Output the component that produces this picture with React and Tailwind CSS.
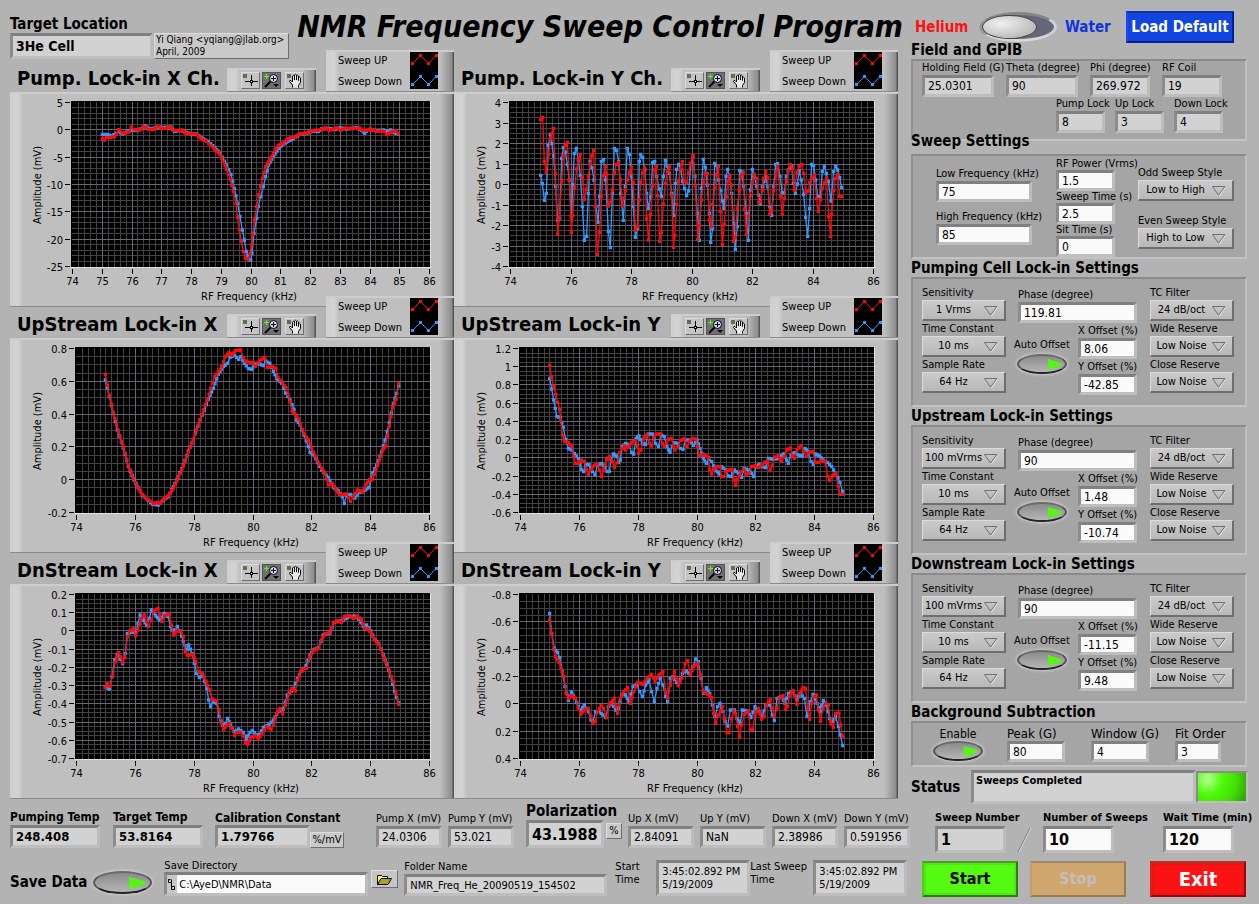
import { useState } from 'react'

// Trace vertices, in thirds of a pixel
const TRACES = {
  pumpX: {
    origin: [30, 276],
    up: '307,415 313,420 319,413 330,413 343,410 349,403 355,389 361,392 367,399 379,398 388,395 394,381 402,388 415,390 424,387 430,381 439,381 445,388 460,389 469,380 478,381 484,386 496,385 508,381 514,383 520,391 530,392 547,390 556,399 568,402 586,401 596,409 606,419 618,422 626,431 640,443 650,454 660,463 670,485 680,508 691,538 700,575 708,610 713,653 718,688 724,724 730,755 736,775 744,778 750,760 755,735 758,705 763,660 770,620 776,585 782,560 788,535 797,500 806,486 815,470 825,450 835,437 850,429 860,420 872,412 885,412 895,404 908,400 925,399 935,392 950,391 965,389 977,383 988,391 1000,387 1010,383 1022,391 1035,384 1050,385 1065,386 1078,384 1088,391 1100,391 1112,387 1128,394 1145,393 1153,395 1160,403 1170,398 1180,394 1188,394 1195,400',
    down: '307,403 322,403 335,408 349,400 357,395 367,402 385,393 400,390 412,392 436,378 448,387 470,383 490,382 513,381 523,395 540,391 560,397 575,404 590,402 610,417 625,425 645,443 660,460 680,495 693,523 703,565 713,610 720,650 727,690 733,720 739,755 748,780 752,780 756,760 762,700 770,655 775,620 782,590 790,560 797,530 806,495 815,478 825,462 837,445 850,432 865,423 880,416 900,403 920,401 935,393 955,395 965,387 985,385 1005,389 1020,383 1040,387 1070,383 1085,391 1094,400 1105,388 1130,391 1150,390 1160,395 1172,390 1182,398 1195,402'
  },
  pumpY: {
    origin: [-3, 276],
    up: '257,359 263,352 268,485 274,517 281,463 286,415 295,385 301,520 308,703 313,655 320,545 325,468 331,436 337,427 343,540 349,697 353,647 359,563 365,507 371,478 376,463 382,533 388,598 394,568 400,530 405,493 410,468 416,451 421,620 427,763 434,697 439,590 445,527 451,499 455,523 460,618 466,607 472,570 478,518 484,493 490,487 496,540 502,616 511,573 517,540 523,517 529,502 535,548 541,690 548,680 553,600 557,547 563,517 569,502 575,655 581,720 587,643 593,557 598,510 604,499 608,587 614,724 619,697 625,613 631,550 637,515 643,499 650,587 655,742 659,707 665,613 670,543 676,508 682,485 688,545 695,548 701,518 706,492 714,466 721,558 728,718 733,678 739,600 745,547 750,520 757,521 763,660 769,680 773,613 779,563 784,523 790,499 796,634 802,733 808,673 814,590 818,543 824,526 829,555 835,724 841,712 847,625 853,570 858,530 865,517 869,627 874,703 880,648 886,587 892,547 898,523 905,535 911,607 917,605 922,570 926,535 932,515 938,533 944,643 950,633 956,573 962,527 968,499 976,590 982,643 988,595 994,545 1000,512 1006,493 1012,505 1018,570 1026,517 1032,500 1040,494 1046,520 1052,577 1060,573 1064,548 1070,535 1078,525 1085,595 1090,634 1097,600 1102,565 1108,547 1115,535 1121,650 1127,709 1130,643 1136,572 1141,535 1148,523 1154,590 1160,590',
    down: '257,526 262,551 268,601 274,580 280,436 286,404 290,430 296,468 302,560 308,661 314,655 320,475 325,442 331,456 337,493 343,540 349,650 358,460 364,445 370,480 376,526 382,620 388,721 395,709 400,580 405,484 411,503 417,540 423,620 429,667 434,590 439,484 446,478 452,540 460,694 466,743 472,580 478,445 485,451 491,485 497,580 505,661 511,560 517,445 523,463 529,530 535,620 541,712 548,685 553,485 557,463 563,472 569,510 575,580 580,625 587,590 593,487 599,484 605,530 613,567 619,590 625,530 631,481 637,499 643,520 650,580 656,646 662,550 665,508 671,493 677,510 683,545 695,587 701,573 708,490 714,470 720,530 727,640 733,721 739,565 745,478 751,502 757,555 763,640 767,727 773,685 779,490 785,497 791,540 802,603 807,625 813,530 818,508 824,530 830,580 836,670 841,748 847,680 854,511 860,515 866,560 874,640 880,721 886,570 892,508 898,525 905,560 916,611 922,560 932,530 938,560 944,620 950,646 956,560 962,493 968,491 975,530 982,578 988,580 994,530 1000,510 1010,500 1015,550 1021,580 1027,552 1033,512 1039,540 1046,583 1052,652 1058,709 1064,625 1070,493 1076,497 1082,540 1088,590 1096,590 1102,514 1108,499 1114,520 1120,545 1128,603 1136,515 1142,499 1148,510 1154,533 1160,563'
  },
  upX: {
    origin: [30, 114],
    up: '316,223 328,287 340,338 355,393 370,441 385,497 400,535 412,560 427,583 440,595 452,604 460,611 470,607 480,610 490,598 505,587 520,565 535,532 550,498 565,455 580,418 595,375 610,330 622,300 632,265 644,230 655,215 665,200 677,170 687,157 697,165 706,152 722,150 730,173 736,183 750,188 760,188 766,199 774,188 784,178 794,172 802,203 815,199 828,206 834,232 848,250 858,263 870,305 876,333 886,343 895,357 908,390 920,413 930,430 945,470 965,505 975,520 985,555 997,550 1008,570 1018,584 1030,583 1040,582 1052,604 1060,590 1072,570 1088,576 1098,553 1108,540 1118,537 1128,510 1138,480 1148,450 1157,438 1168,378 1178,322 1188,298 1196,250',
    down: '316,240 328,290 352,390 370,444 385,500 402,540 427,585 445,602 458,613 475,615 490,600 505,590 520,560 535,530 550,495 565,453 580,418 600,360 613,330 625,298 640,265 655,222 670,200 682,190 690,172 704,166 716,178 722,170 733,190 745,205 754,208 766,193 775,190 790,197 797,183 810,190 820,214 830,235 845,250 857,280 870,300 882,328 890,360 900,375 912,405 925,440 930,457 942,465 965,510 985,532 1000,562 1015,573 1027,590 1033,610 1040,585 1052,583 1065,594 1078,578 1095,570 1106,563 1118,518 1130,495 1145,455 1155,420 1168,368 1180,310 1190,280 1196,258'
  },
  upY: {
    origin: [-3, 114],
    up: '284,196 290,232 296,260 302,283 308,308 314,328 317,360 323,407 329,424 340,428 350,438 356,470 362,490 370,489 380,480 388,485 394,508 400,523 408,508 418,496 427,492 433,510 440,530 446,510 455,478 464,470 472,485 478,502 486,488 494,458 502,445 508,438 512,450 520,440 530,427 542,422 547,440 551,460 558,450 566,415 576,404 583,430 590,438 596,412 604,402 616,401 622,430 628,440 634,430 640,418 650,416 656,440 660,450 668,440 676,422 688,416 696,440 702,425 712,416 722,417 728,440 733,467 745,463 760,472 765,510 770,522 776,508 786,500 795,500 800,530 806,530 812,515 822,510 832,508 838,540 842,556 848,538 858,515 866,508 874,522 882,520 890,500 902,497 910,503 920,496 928,488 938,483 945,512 952,496 960,472 970,466 980,485 988,470 995,450 1006,444 1012,468 1018,475 1026,450 1038,436 1046,455 1054,469 1062,457 1074,455 1082,488 1090,487 1098,482 1110,485 1118,530 1124,541 1132,528 1142,520 1150,560 1156,583 1163,583',
    down: '284,235 296,300 306,350 316,352 325,382 332,418 340,445 350,450 358,460 370,476 380,508 386,515 392,495 402,493 412,515 420,523 428,495 440,490 450,500 456,514 463,514 468,478 475,462 484,468 490,488 496,480 502,440 512,430 522,435 530,458 536,462 543,415 552,408 562,430 572,434 580,402 592,402 602,430 610,440 618,405 628,410 636,440 645,457 652,440 660,428 668,430 676,445 684,448 692,420 702,420 716,436 726,420 735,445 745,475 754,490 762,478 770,485 782,510 792,522 800,500 812,510 820,528 828,530 838,510 850,520 860,532 868,505 880,510 890,520 896,530 902,500 912,493 922,500 932,503 940,475 955,478 970,476 985,462 995,480 1000,490 1008,465 1018,458 1030,465 1042,468 1050,445 1060,455 1068,485 1075,493 1082,462 1094,468 1104,480 1118,488 1130,500 1142,520 1155,548 1163,575'
  },
  dnX: {
    origin: [30, 117],
    up: '316,427 322,415 330,424 338,390 346,350 355,322 362,335 368,353 375,338 382,275 390,258 400,251 407,272 414,255 424,220 434,210 440,230 446,245 454,225 462,198 474,190 480,210 486,230 494,212 508,207 514,240 521,270 530,258 542,258 550,275 556,320 562,332 578,328 588,350 596,380 606,386 618,408 628,435 636,462 650,467 657,495 664,535 671,553 680,540 688,535 696,550 704,571 712,562 722,562 730,572 736,593 743,598 752,578 766,572 776,582 786,565 800,545 813,554 820,540 830,505 840,490 848,506 856,480 866,448 876,430 886,438 893,405 902,380 912,370 920,370 928,340 938,318 956,310 964,285 974,267 990,262 1000,233 1012,227 1024,232 1034,214 1048,212 1060,220 1072,213 1084,224 1094,250 1104,252 1114,265 1124,285 1136,298 1148,325 1158,352 1168,380 1180,410 1188,445 1196,478',
    down: '316,427 328,432 336,395 344,345 352,328 360,343 368,356 376,325 382,265 396,262 408,262 414,235 420,210 430,225 440,242 448,220 454,195 462,205 478,225 484,218 492,205 504,215 512,245 522,265 532,244 540,258 550,290 560,314 566,300 576,325 590,385 598,398 608,390 620,430 626,465 632,485 640,470 650,475 658,515 668,540 676,535 683,520 692,540 702,560 716,552 730,562 740,583 750,562 757,556 768,570 778,568 790,547 806,540 820,525 835,500 850,492 862,450 880,432 892,400 905,378 918,362 930,330 940,315 956,308 970,270 990,264 1002,232 1030,225 1048,215 1064,213 1076,222 1090,245 1100,240 1112,258 1124,283 1136,295 1150,330 1160,357 1172,395 1184,440 1196,474'
  },
  dnY: {
    origin: [-3, 117],
    up: '284,225 290,265 296,313 302,335 312,352 318,368 327,395 333,445 340,460 350,452 362,460 370,490 378,508 388,495 400,490 408,515 414,536 420,530 428,500 438,482 446,490 454,518 462,480 478,460 488,505 496,460 506,440 518,428 526,475 536,440 548,412 564,418 576,400 590,388 600,410 612,390 624,380 632,440 638,460 646,420 658,380 670,422 680,400 690,355 698,347 706,390 716,365 728,355 736,390 744,440 758,448 770,458 776,505 782,535 790,510 802,485 808,520 816,563 822,563 830,520 836,498 842,505 848,545 854,576 860,540 868,508 880,498 886,555 893,553 900,510 910,490 920,522 928,515 934,480 946,464 952,490 958,515 966,490 972,460 984,452 992,493 998,485 1004,452 1014,436 1020,455 1026,478 1034,445 1044,427 1052,430 1058,490 1064,523 1070,475 1078,455 1084,450 1090,495 1097,528 1104,490 1112,475 1120,480 1126,530 1135,547 1142,505 1152,504 1157,540 1163,575',
    down: '284,205 290,265 298,310 308,323 314,338 322,380 330,425 340,466 349,441 360,460 370,485 378,495 388,480 400,500 408,525 414,530 422,500 432,500 444,510 452,518 460,485 470,475 482,495 490,490 500,448 512,450 522,470 534,424 546,420 554,440 562,455 572,420 582,405 590,440 598,470 606,430 616,400 624,420 632,455 638,470 646,400 654,395 670,420 682,385 694,378 706,390 714,365 722,342 730,350 738,400 746,445 754,428 764,445 772,480 780,515 788,485 795,475 804,500 810,530 818,543 826,495 838,495 846,520 856,535 862,495 878,498 888,518 900,485 912,500 922,515 932,480 944,480 952,510 958,527 966,460 980,455 990,475 1000,445 1014,440 1026,465 1036,445 1048,460 1056,515 1066,470 1074,448 1086,475 1096,500 1105,466 1114,480 1124,520 1132,530 1142,515 1150,545 1156,570 1163,602'
  }
}

const EVEN_FREQS = [74, 76, 78, 80, 82, 84, 86]
const ALL_FREQS = [74, 75, 76, 77, 78, 79, 80, 81, 82, 83, 84, 85, 86]

const CHARTS = [
  { id: 'pumpX', title: 'Pump. Lock-in X Ch.', left: 62, xs: ALL_FREQS, xMinor: 5, yMinor: 5, ys: ['5', '0', '-5', '-10', '-15', '-20', '-25'] },
  { id: 'pumpY', title: 'Pump. Lock-in Y Ch.', left: 56, xs: EVEN_FREQS, xMinor: 10, yMinor: 4, ys: ['4', '3', '2', '1', '0', '-1', '-2', '-3', '-4'] },
  { id: 'upX', title: 'UpStream Lock-in X', left: 66, xs: EVEN_FREQS, xMinor: 10, yMinor: 4, ys: ['0.8', '0.6', '0.4', '0.2', '0', '-0.2'] },
  { id: 'upY', title: 'UpStream Lock-in Y', left: 66, xs: EVEN_FREQS, xMinor: 10, yMinor: 4, ys: ['1.2', '1', '0.8', '0.6', '0.4', '0.2', '0', '-0.2', '-0.4', '-0.6'] },
  { id: 'dnX', title: 'DnStream Lock-in X', left: 66, xs: EVEN_FREQS, xMinor: 10, yMinor: 4, ys: ['0.2', '0.1', '0', '-0.1', '-0.2', '-0.3', '-0.4', '-0.5', '-0.6', '-0.7'] },
  { id: 'dnY', title: 'DnStream Lock-in Y', left: 66, xs: EVEN_FREQS, xMinor: 10, yMinor: 4, ys: ['-0.8', '-0.6', '-0.4', '-0.2', '0', '0.2', '0.4'] }
]

const LOCKINS = [
  { title: 'Pumping Cell Lock-in Settings', sensitivity: '1 Vrms', phase: '119.81', x: '8.06', y: '-42.85' },
  { title: 'Upstream Lock-in Settings', sensitivity: '100 mVrms', phase: '90', x: '1.48', y: '-10.74' },
  { title: 'Downstream Lock-in Settings', sensitivity: '100 mVrms', phase: '90', x: '-11.15', y: '9.48' }
]

const INSET = 'border-[3px] border-t-[#808080] border-l-[#8c8c8c] border-r-[#bcbcbc] border-b-[#bebebe]'
const RAISED = 'border border-t-[#dcdcdc] border-l-[#dcdcdc] border-r-[#6e6e6e] border-b-[#6e6e6e]'
const FRAME = 'border-t-2 border-b border-t-[#cdcdcd] border-b-[#8a8a8a] bg-[linear-gradient(to_right,#cfcfcf,#d3d3d3_8px,#bfbfbf_13px,#bfbfbf_calc(100%_-_14px),#8c8c8c_calc(100%_-_2px),#555_calc(100%_-_1px))]'

// Turn "x,y x,y" into evenly spaced samples
function samples(str) {
  const pts = str.split(' ').map((p) => p.split(',').map(Number))
  const out = [pts[0]]
  for (let i = 1; i < pts.length; i++) {
    const [x0, y0] = pts[i - 1]
    const [x1, y1] = pts[i]
    const n = Math.max(1, Math.round((x1 - x0) / 6))
    for (let k = 1; k <= n; k++) {
      out.push([x0 + ((x1 - x0) * k) / n, y0 + ((y1 - y0) * k) / n])
    }
  }
  return out
}

function Trace({ data, color }) {
  const pts = samples(data)
  return (
    <g>
      <path d={'M' + pts.map((p) => p.join(' ')).join('L')} fill="none" stroke={color} strokeWidth="4" />
      <path d={pts.map(([x, y]) => `M${x - 5} ${y - 5}h10v10h-10z`).join('')} fill={color} />
    </g>
  )
}

function Plot({ id, title, left, xs, ys, xMinor, yMinor }) {
  const right = 420
  const top = 10
  const bottom = 175
  const { origin, up, down } = TRACES[id]
  const xCount = (xs.length - 1) * xMinor
  const yCount = (ys.length - 1) * yMinor
  const xAt = (i) => Math.round(left + ((right - 1 - left) * i) / xCount) + 0.5
  const yAt = (i) => Math.round(top + ((bottom - 1 - top) * i) / yCount) + 0.5

  const minor = []
  const major = []
  for (let i = 1; i < xCount; i++) {
    (i % xMinor ? minor : major).push(`M${xAt(i)} ${top}V${bottom}`)
  }
  for (let i = 1; i < yCount; i++) {
    (i % yMinor ? minor : major).push(`M${left} ${yAt(i)}H${right}`)
  }

  return (
    <svg viewBox="0 0 444 214" className="block w-full" role="img" aria-label={title}>
      <rect x={left - 1} y={top - 1} width={right - left + 2} height={bottom - top + 2} fill="#e0e0e0" />
      <rect x={left - 1} y={top - 1} width={right - left + 1} height={bottom - top + 1} fill="#000" />
      <path d={minor.join('')} stroke="#424242" shapeRendering="crispEdges" />
      <path d={major.join('')} stroke="#66667a" shapeRendering="crispEdges" />
      <g transform={`scale(${1 / 3}) translate(${-origin[0]} ${-origin[1]})`}>
        <Trace data={down} color="#3399ff" />
        <Trace data={up} color="#ff0a0a" />
      </g>
      <g className="text-[11px]" fill="#000">
        {xs.map((x, i) => (
          <g key={x}>
            <path d={`M${xAt(i * xMinor)} 177v5`} stroke="#000" shapeRendering="crispEdges" />
            <text x={xAt(i * xMinor)} y="193" textAnchor="middle">{x}</text>
          </g>
        ))}
        {ys.map((y, i) => (
          <g key={y}>
            <path d={`M${left - 7} ${yAt(i * yMinor)}h5`} stroke="#000" shapeRendering="crispEdges" />
            <text x={left - 9} y={yAt(i * yMinor) + 4} textAnchor="end">{y}</text>
          </g>
        ))}
        <text x={(left + right) / 2 - 2} y="208" textAnchor="middle">RF Frequency (kHz)</text>
        <text transform="translate(31 93) rotate(-90)" textAnchor="middle">Amplitude (mV)</text>
      </g>
    </svg>
  )
}

function Palette() {
  return (
    <div className={`flex h-6 w-[89px] items-center gap-[2px] pl-[14px] ${FRAME}`}>
      <button type="button" aria-label="Cursor" className={`bg-[#c4c4c4] ${RAISED}`}>
        <svg width="17" height="15" viewBox="0 0 17 15">
          <rect x="1" y="1" width="4" height="4" fill="#55754a" />
          <path d="M9.5 2v11M3 8.5h13" stroke="#000" />
          <rect x="8" y="7" width="3" height="3" fill="#000" />
          <rect x="9" y="8" width="1" height="1" fill="#fff" />
        </svg>
      </button>
      <button type="button" aria-label="Zoom" className="border border-[#555] bg-[#707070]">
        <svg width="17" height="15" viewBox="0 0 17 15">
          <path d="M3.5 1v5M1 3.500h5" stroke="#5f1" />
          <circle cx="10.500" cy="5.500" r="4" fill="#d5d5ff" stroke="#000" />
          <path d="M10.500 3v5M8 5.500h5" stroke="#000" />
          <path d="M7.500 8.500L2 14" stroke="#000" strokeWidth="2" />
          <path d="M10 11h6l-3 3z" fill="#000" />
        </svg>
      </button>
      <button type="button" aria-label="Pan" className={`ml-[2px] bg-[#c4c4c4] ${RAISED}`}>
        <svg width="17" height="15" viewBox="0 0 17 15">
          <rect x="1" y="1" width="4" height="4" fill="#55754a" />
          <path
            d="M6.500 14.500V12L3.500 8.500Q3.500 7 5 7.500L6.500 9V3Q7.500 1.500 8.500 3V7V2Q9.500 .5 10.500 2V7V2.500Q11.500 1.500 12.500 3V7.500V4.500Q13.500 3.500 14.500 5V9.500L12.500 12.500V14.500"
            fill="#e8e8e8"
            stroke="#000"
          />
        </svg>
      </button>
    </div>
  )
}

function Legend() {
  return (
    <div className={`relative flex h-[42px] w-32 justify-between pr-4 pl-3 ${FRAME}`}>
      <div className="-mt-[2px] flex flex-col text-[11px] leading-[21px]">
        <span>Sweep UP</span>
        <span>Sweep Down</span>
      </div>
      <svg width="28" height="37" viewBox="0 0 28 37">
        <rect width="28" height="37" fill="#000" />
        {[['#ff0a0a', 0], ['#3399ff', 21]].map(([color, dy]) => (
          <g key={color} transform={`translate(0 ${dy})`} fill={color}>
            <path d="M2.500 11.500L10.500 3.500L18.500 11.500L26 3.500" fill="none" stroke={color} />
            <path d="M1 10h3v3H1zM9 2h3v3H9zM17 10h3v3h-3zM25 2h3v3h-3z" />
          </g>
        ))}
      </svg>
    </div>
  )
}

function ChartCard({ chart, overlap }) {
  return (
    <section className={overlap ? '-mt-[11px]' : ''}>
      <div className="flex items-end">
        <h2 className="flex-1 pl-[7px] text-[20px] leading-[28px] font-bold whitespace-nowrap">{chart.title}</h2>
        <Palette />
        <div className="ml-[10px]">
          <Legend />
        </div>
      </div>
      <div className={FRAME}>
        <div className="-mt-[2px]">
          <Plot {...chart} />
        </div>
      </div>
    </section>
  )
}

function Field({ label, value, className = '', labelClass = 'text-[11px] leading-[15px]', boxClass = 'h-[21px] text-[12px]', readOnly = false }) {
  return (
    <label className={`flex flex-col ${className}`}>
      <span className={`whitespace-nowrap ${labelClass}`}>{label}</span>
      <input
        defaultValue={value}
        readOnly={readOnly}
        className={`w-full min-w-0 px-[3px] outline-none ${INSET} ${boxClass} ${readOnly ? 'bg-[#d2d2d2]' : 'bg-[#fafafa]'}`}
      />
    </label>
  )
}

function Ring({ label, options, className = '' }) {
  return (
    <label className={`flex flex-col ${className}`}>
      <span className="text-[11px] leading-[15px] whitespace-nowrap">{label}</span>
      <span className="relative flex">
        <select
          className={`h-[21px] w-full appearance-none bg-[linear-gradient(#cacaca,#b8b8b8)] pr-[20px] text-center text-[11px] leading-[18px] outline-none ${RAISED} border-r-2 border-b-2`}
        >
          {options.map((o) => (
            <option key={o}>{o}</option>
          ))}
        </select>
        <svg className="pointer-events-none absolute top-[6px] right-[7px]" width="15" height="11" viewBox="0 0 15 11">
          <path d="M14 .5L7.500 10" stroke="#e4e4e4" />
          <path d="M.5 .5h12.500L6.500 9z" fill="none" stroke="#707070" />
        </svg>
      </span>
    </label>
  )
}

function OvalButton({ label, large = false }) {
  const [on, setOn] = useState(true)
  return (
    <button
      type="button"
      aria-label={label}
      aria-pressed={on}
      onClick={() => setOn(!on)}
      className={`flex shrink-0 items-center justify-end rounded-[50%] border-2 border-t-[#6a6a6a] border-r-[#555] border-b-[#222] border-l-[#555] bg-[linear-gradient(#8b8b8b,#b5b5b5)] shadow-[0_0_3px_1px_#cfcfcf] ${large ? 'h-[23px] w-[59px] pr-[5px]' : 'h-5 w-[50px] pr-1'}`}
    >
      <svg width={large ? 16 : 13} height={large ? 12 : 11} viewBox="0 0 14 11" preserveAspectRatio="none">
        <path d="M0 0L14 4V7L0 11z" fill={on ? '#55f516' : '#2d6a14'} />
      </svg>
    </button>
  )
}

function Heading({ children, className = '' }) {
  return <h2 className={`text-[15px] leading-[18px] font-bold whitespace-nowrap ${className}`}>{children}</h2>
}

function Panel({ children, className = '' }) {
  return (
    <div className={`mr-3 border-2 border-t-[#8a8a8a] border-r-[#bfbfbf] border-b-[#c2c2c2] border-l-[#929292] bg-[#a5a5a5] ${className}`}>
      {children}
    </div>
  )
}

function LockinPanel({ settings }) {
  return (
    <section>
      <Heading>{settings.title}</Heading>
      <Panel className="flex h-[130px] pt-[6px] pl-[9px]">
        <div className="w-[84px]">
          <Ring label="Sensitivity" options={[settings.sensitivity]} />
          <Ring label="Time Constant" options={['10 ms', '30 ms', '100 ms']} />
          <Ring label="Sample Rate" options={['64 Hz', '128 Hz', '256 Hz']} />
        </div>
        <div className="ml-3 w-[119px] pt-[2px]">
          <Field label="Phase (degree)" value={settings.phase} />
          <div className="flex justify-between">
            <div className="-ml-1 flex flex-col items-center gap-[2px] pt-[14px]">
              <span className="text-[11px] leading-[15px] whitespace-nowrap">Auto Offset</span>
              <OvalButton label="Auto Offset" />
            </div>
            <div className="w-[59px] shrink-0">
              <Field label="X Offset (%)" value={settings.x} />
              <Field label="Y Offset (%)" value={settings.y} />
            </div>
          </div>
        </div>
        <div className="ml-[13px] w-[84px]">
          <Ring label="TC Filter" options={['24 dB/oct', '18 dB/oct', '12 dB/oct']} />
          <Ring label="Wide Reserve" options={['Low Noise', 'Normal', 'High Reserve']} />
          <Ring label="Close Reserve" options={['Low Noise', 'Normal', 'High Reserve']} />
        </div>
      </Panel>
    </section>
  )
}

function TimeStamp({ label, className }) {
  return (
    <label className="flex items-start">
      <span className={`shrink-0 text-[11px] leading-[13px] ${className}`}>{label}</span>
      <textarea
        readOnly
        rows={2}
        defaultValue={'3:45:02.892 PM\n5/19/2009'}
        className={`h-9 w-[94px] resize-none overflow-hidden bg-[#d2d2d2] px-[3px] pt-[2px] text-[11px] leading-[13px] whitespace-nowrap outline-none ${INSET}`}
      />
    </label>
  )
}

export default function App() {
  const [gas, setGas] = useState('helium')
  const boldLabel = 'text-[12px] leading-[16px] font-bold'
  const boldBox = 'h-[23px] text-[13px] font-bold'
  const small = { readOnly: true, boxClass: 'h-[22px] text-[12px]' }
  const lock = { readOnly: true, labelClass: 'text-[11px] leading-[14px]', boxClass: 'h-[22px] text-[12px]' }
  const sweep = { className: 'w-[59px]', labelClass: 'text-[11px] leading-[12px]' }
  const count = { labelClass: 'text-[11px] leading-[16px] font-bold', boxClass: 'h-[27px] text-[16px] font-bold' }

  return (
    <div className="flex min-h-screen bg-[#b3b3b3] font-['DejaVu_Sans_Condensed','Noto_Sans',sans-serif] text-black">
      <main className="min-w-0 flex-1 pl-[10px]">
        <header className="flex h-[50px] items-start justify-between pt-[10px] pr-2">
          <div className="flex items-end pt-[6px]">
            <Field
              label="Target Location"
              value="3He Cell"
              readOnly
              className="w-[143px]"
              labelClass="text-[15px] leading-[17px] font-bold"
              boxClass="h-[26px] text-[14px] font-bold"
            />
            <div className={`ml-px w-[135px] bg-[#c9c9c9] px-[1px] text-[10px] leading-[12px] whitespace-nowrap ${RAISED}`}>
              Yi Qiang &lt;yqiang@jlab.org&gt;
              <br />
              April, 2009
            </div>
          </div>
          <h1 className="text-[30px] leading-[34px] font-bold whitespace-nowrap italic">NMR Frequency Sweep Control Program</h1>
        </header>

        <div className="mr-[13px] grid grid-cols-2">
          {CHARTS.map((chart, i) => (
            <ChartCard key={chart.id} chart={chart} overlap={i > 1} />
          ))}
        </div>

        <div className="flex h-[49px] items-end">
          <Field label="Pumping Temp" value="248.408" readOnly className="w-[90px]" labelClass={boldLabel} boxClass={boldBox} />
          <Field label="Target Temp" value="53.8164" readOnly className="ml-[13px] w-[90px]" labelClass={boldLabel} boxClass={boldBox} />
          <Field label="Calibration Constant" value="1.79766" readOnly className="ml-3 w-[95px]" labelClass="text-[12px] leading-[13px] font-bold" boxClass={boldBox} />
          <button type="button" className={`h-4 w-[34px] bg-[#c9c9c9] text-[11px] leading-[14px] ${RAISED}`}>%/mV</button>
          <Field label="Pump X (mV)" value="24.0306" className="ml-8 w-[66px]" {...small} />
          <Field label="Pump Y (mV)" value="53.021" className="ml-[6px] w-[66px]" {...small} />
          <Field label="Polarization" value="43.1988" readOnly className="ml-3 w-[78px]" labelClass="text-[15px] leading-[18px] font-bold" boxClass="h-[28px] text-[16px] font-bold" />
          <button type="button" className={`mb-[9px] ml-[2px] h-4 w-4 bg-[#c9c9c9] text-[11px] leading-[14px] ${RAISED}`}>%</button>
          <Field label="Up X (mV)" value="2.84091" className="ml-[6px] w-[66px]" {...small} />
          <Field label="Up Y (mV)" value="NaN" className="ml-[6px] w-[66px]" {...small} />
          <Field label="Down X (mV)" value="2.38986" className="ml-[6px] w-[66px]" {...small} />
          <Field label="Down Y (mV)" value="0.591956" className="ml-[6px] w-[66px]" {...small} />
        </div>

        <div className="flex h-12 items-end">
          <div className="flex items-center gap-[6px]">
            <span className="text-[15px] leading-[27px] font-bold whitespace-nowrap">Save Data</span>
            <OvalButton label="Save Data" large />
          </div>
          <label className="ml-3 flex w-[204px] flex-col">
            <span className="text-[11px] leading-[13px]">Save Directory</span>
            <span className={`flex h-6 items-center bg-[#c6c6c6] ${INSET}`}>
              <svg width="10" height="12" viewBox="0 0 10 12" className="shrink-0">
                <path d="M3.500 1.500h-2v3h3v4h3v3h-3v-3M4.500 1.500v3" fill="none" stroke="#000" />
              </svg>
              <input defaultValue="C:\AyeD\NMR\Data" className="h-full min-w-0 flex-1 bg-[#fafafa] px-[2px] text-[11px] outline-none" />
            </span>
          </label>
          <button type="button" aria-label="Browse" className={`mb-2 ml-[3px] flex h-[18px] w-[27px] items-center justify-center bg-[#c6c6c6] ${RAISED}`}>
            <svg width="15" height="11" viewBox="0 0 15 11">
              <path d="M.5 10.500V1.500h4l1 1h5v2" fill="#ffff4d" stroke="#000" />
              <path d="M.5 10.500L4 4.500h10.500L11 10.500z" fill="#a3a32f" stroke="#000" />
            </svg>
          </button>
          <Field label="Folder Name" value="NMR_Freq_He_20090519_154502" readOnly className="ml-[6px] w-[203px]" boxClass="h-[22px] text-[11px]" />
          <div className="ml-2 flex">
            <TimeStamp label="Start Time" className="w-[41px] pr-2" />
            <TimeStamp label="Last Sweep Time" className="w-[63px]" />
          </div>
        </div>
      </main>

      <aside className="w-[348px] shrink-0 pt-[11px]">
        <div className="flex h-8 items-center pl-1">
          <span className="w-[64px] text-[15px] font-bold text-[#f11]">Helium</span>
          <button
            type="button"
            aria-label="Target gas"
            aria-pressed={gas === 'water'}
            onClick={() => setGas(gas === 'helium' ? 'water' : 'helium')}
            className={`flex h-[30px] w-[78px] items-center rounded-[50%] border-[3px] border-t-[#858585] border-r-[#d2d2d2] border-b-[#d8d8d8] border-l-[#999] bg-[#66667a] ${gas === 'water' ? 'justify-end' : ''}`}
          >
            <span className="h-6 w-[55px] rounded-[50%] border border-[#444] bg-[radial-gradient(ellipse_at_35%_35%,#f0f0f0,#a8a8a8)]" />
          </button>
          <span className="ml-[8px] w-[61px] text-[15px] font-bold text-[#13d]">Water</span>
          <button type="button" className="h-8 w-[108px] border-2 border-t-[#13a] border-r-[#028] border-b-[#028] border-l-[#24e] bg-[#1144e0] text-[15px] font-bold whitespace-nowrap text-white">
            Load Default
          </button>
        </div>

        <Heading className="-mt-[2px]">Field and GPIB</Heading>
        <Panel className="h-[82px] pl-[9px]">
          <div className="flex gap-3">
            <Field label="Holding Field (G)" value="25.0301" className="w-[72px]" {...lock} />
            <Field label="Theta (degree)" value="90" className="w-[72px]" {...lock} />
            <Field label="Phi (degree)" value="269.972" className="w-[60px]" {...lock} />
            <Field label="RF Coil" value="19" className="w-[60px]" {...lock} />
          </div>
          <div className="flex justify-end gap-[10px] pr-[22px]">
            <Field label="Pump Lock" value="8" className="w-[49px]" {...lock} />
            <Field label="Up Lock" value="3" className="w-[49px]" {...lock} />
            <Field label="Down Lock" value="4" className="w-[49px]" {...lock} />
          </div>
        </Panel>

        <Heading className="relative -mt-[9px] mb-[4px]">Sweep Settings</Heading>
        <Panel className="flex h-[105px] pl-[23px]">
          <div className="flex w-[96px] flex-col gap-[7px] pt-[10px]">
            <Field label="Low Frequency (kHz)" value="75" />
            <Field label="High Frequency (kHz)" value="85" />
          </div>
          <div className="ml-6 w-[60px] pt-[2px]">
            <Field label="RF Power (Vrms)" value="1.5" {...sweep} />
            <Field label="Sweep Time (s)" value="2.5" {...sweep} />
            <Field label="Sit Time (s)" value="0" {...sweep} />
          </div>
          <div className="ml-[22px] flex w-[96px] flex-col gap-3 pt-[9px]">
            <Ring label="Odd Sweep Style" options={['Low to High', 'High to Low']} />
            <Ring label="Even Sweep Style" options={['High to Low', 'Low to High']} />
          </div>
        </Panel>

        {LOCKINS.map((settings) => (
          <LockinPanel key={settings.title} settings={settings} />
        ))}

        <Heading>Background Subtraction</Heading>
        <Panel className="flex h-[46px] pl-5">
          <div className="flex w-[50px] flex-col items-center pt-[4px]">
            <span className="text-[12px] leading-[14px]">Enable</span>
            <OvalButton label="Enable" />
          </div>
          <div className="ml-6 flex gap-[26px] pt-[3px]">
            <Field label="Peak (G)" value="80" className="w-[58px]" labelClass="text-[13px] leading-[15px]" />
            <Field label="Window (G)" value="4" className="w-[58px]" labelClass="text-[13px] leading-[15px]" />
            <Field label="Fit Order" value="3" className="w-[46px]" labelClass="text-[13px] leading-[15px]" />
          </div>
        </Panel>

        <div className="mt-[3px] mr-[11px] flex h-[34px] items-center">
          <Heading className="w-[60px]">Status</Heading>
          <div className={`h-full flex-1 bg-[#d2d2d2] px-[2px] text-[11px] leading-[16px] font-bold ${INSET}`}>Sweeps Completed</div>
          <div className="h-8 w-[52px] border-2 border-t-[#8a8a8a] border-r-[#bebebe] border-b-[#bebebe] border-l-[#8a8a8a] bg-[radial-gradient(circle_at_20%_22%,#b5ff90,#4dfa08_35%,#43e006_65%,#2f9a05)]" />
        </div>

        <div className="mt-[6px] flex items-end pl-6">
          <Field label="Sweep Number" value="1" readOnly className="w-[71px]" {...count} />
          <svg width="15" height="26" viewBox="0 0 15 26" className="mx-[11px]">
            <path d="M1 25L13 1" stroke="#777" />
            <path d="M2 25L14 1" stroke="#d5d5d5" />
          </svg>
          <Field label="Number of Sweeps" value="10" className="w-[71px]" {...count} />
          <Field label="Wait Time (min)" value="120" className="ml-[49px] w-[71px]" {...count} />
        </div>

        <div className="mt-2 flex pl-[11px]">
          <button type="button" className="h-9 w-24 border-2 border-t-[#4b9a2a] border-r-[#2b8005] border-b-[#2b8005] border-l-[#4fd015] bg-[#55fa12] text-[16px] font-bold shadow-[inset_0_0_0_2px_#50e515]">
            Start
          </button>
          <button type="button" disabled className="ml-3 h-9 w-24 border-2 border-t-[#a08868] border-r-[#9d7a4c] border-b-[#9d7a4c] border-l-[#c09e70] bg-[#cfa66e] text-[16px] font-bold text-[#c3bfb8]">
            Stop
          </button>
          <button type="button" className="ml-6 h-9 w-24 border-2 border-t-[#b03030] border-r-[#a00505] border-b-[#a00505] border-l-[#d82020] bg-[#fb1212] text-[20px] font-bold text-white shadow-[inset_0_0_0_2px_#e81414]">
            Exit
          </button>
        </div>
      </aside>
    </div>
  )
}
